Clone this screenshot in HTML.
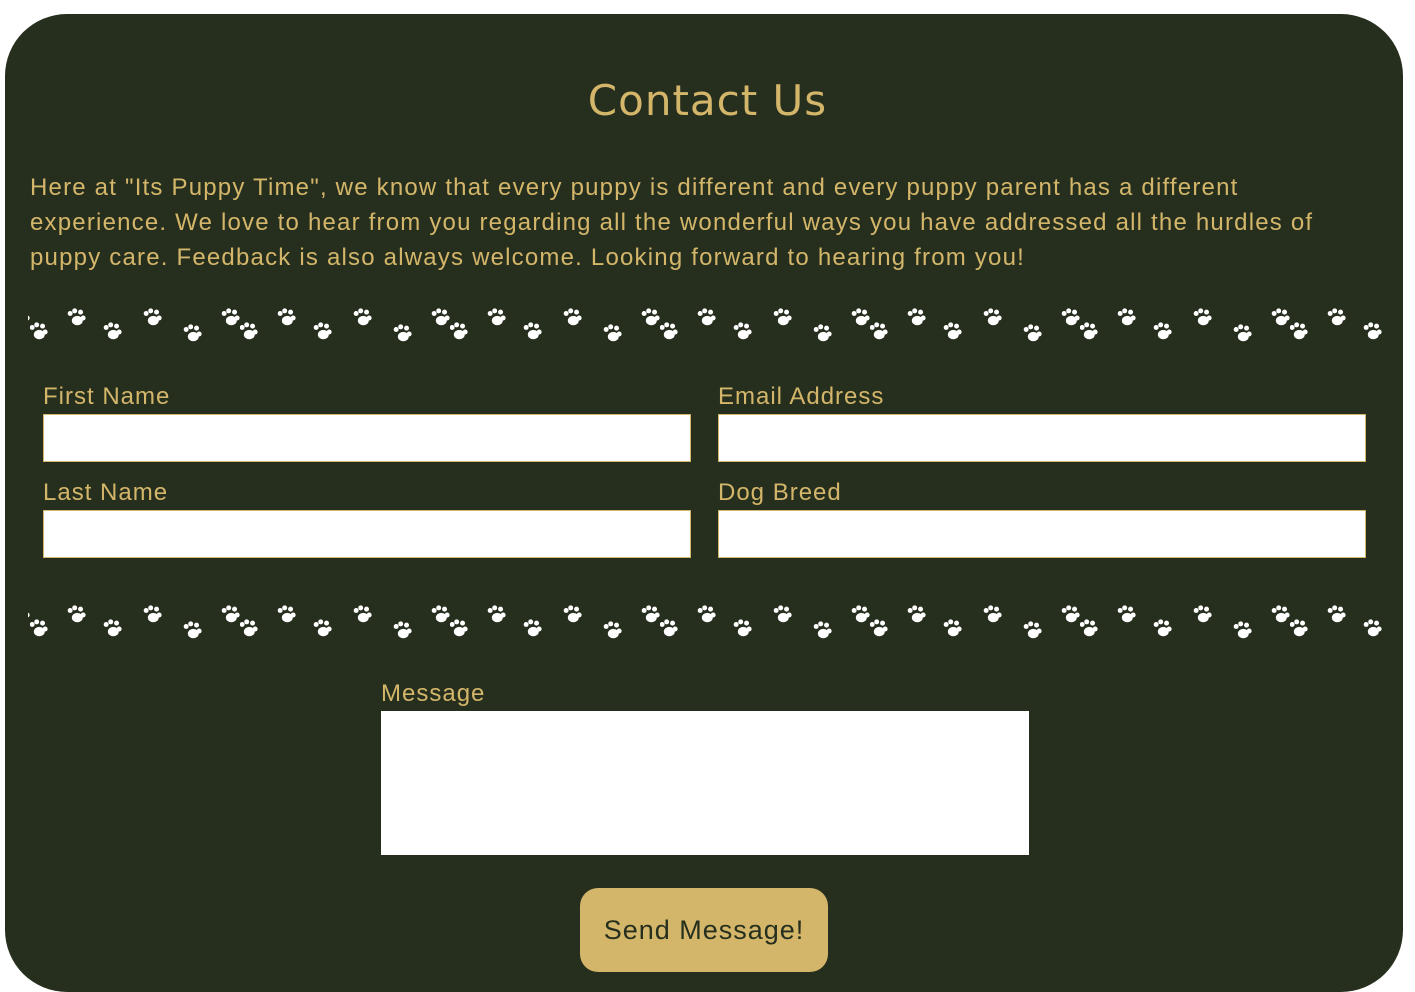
<!DOCTYPE html>
<html><head><style>
html,body{margin:0;background:#fff;width:1415px;height:992px;overflow:hidden;font-family:"Liberation Sans",sans-serif;}
.wrap{position:relative;width:1415px;height:992px;overflow:hidden;}
.box{position:absolute;left:5px;top:14px;width:1398px;height:978px;background:#262f1e;border-radius:62px;}
h1{position:absolute;left:0;width:1415px;top:76px;margin:0;text-align:center;font-weight:normal;font-size:42px;color:#d4b66a;letter-spacing:1px;font-family:"DejaVu Sans",sans-serif;}
p{position:absolute;left:30px;top:170px;margin:0;font-size:24px;line-height:35px;color:#d4b66a;white-space:nowrap;letter-spacing:1.2px;}
.lbl{position:absolute;font-size:24px;color:#d4b66a;letter-spacing:1px;}
.in{position:absolute;background:#fff;border:1px solid #d4b66a;box-sizing:border-box;}
.btn{position:absolute;left:580px;top:888px;width:248px;height:84px;background:#d4b66a;border-radius:18px;color:#262f1e;font-size:27px;text-align:center;line-height:84px;letter-spacing:1px;}
</style></head><body><div class="wrap">
<div class="box"></div>
<h1>Contact Us</h1>
<p>Here at "Its Puppy Time", we know that every puppy is different and every puppy parent has a different<br>experience. We love to hear from you regarding all the wonderful ways you have addressed all the hurdles of<br>puppy care. Feedback is also always welcome. Looking forward to hearing from you!</p>
<svg width="1415" height="992" style="position:absolute;left:0;top:0">
<defs>
<g id="paw" fill="#fff" transform="scale(1.3)"><ellipse cx="1" cy="2" rx="4.2" ry="3.6"/><circle cx="-4.5" cy="-3.5" r="1.9"/><circle cx="-1" cy="-5.5" r="1.9"/><circle cx="3.5" cy="-4.5" r="1.9"/><circle cx="5.5" cy="0" r="1.9"/></g>
<pattern id="pp" x="30" y="303" width="210" height="60" patternUnits="userSpaceOnUse">
<use href="#paw" x="8" y="29"/><use href="#paw" x="46" y="15"/><use href="#paw" x="82" y="29"/><use href="#paw" x="122" y="15"/><use href="#paw" x="162" y="31"/><use href="#paw" x="200" y="15"/>
</pattern>
</defs>
<rect x="28" y="303" width="1360" height="50" fill="url(#pp)"/>
<rect x="28" y="303" width="1360" height="50" fill="url(#pp)" transform="translate(0,297)"/>
</svg>
<div class="lbl" style="left:43px;top:383px">First Name</div>
<div class="in" style="left:43px;top:414px;width:648px;height:48px"></div>
<div class="lbl" style="left:718px;top:383px">Email Address</div>
<div class="in" style="left:718px;top:414px;width:648px;height:48px"></div>
<div class="lbl" style="left:43px;top:479px">Last Name</div>
<div class="in" style="left:43px;top:510px;width:648px;height:48px"></div>
<div class="lbl" style="left:718px;top:479px">Dog Breed</div>
<div class="in" style="left:718px;top:510px;width:648px;height:48px"></div>
<div class="lbl" style="left:381px;top:680px">Message</div>
<div class="in" style="left:381px;top:711px;width:648px;height:144px;border:none"></div>
<div class="btn">Send Message!</div>
</div></body></html>
